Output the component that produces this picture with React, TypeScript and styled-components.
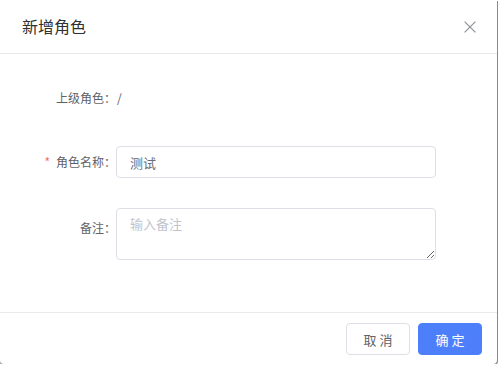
import React from "react";
import styled, { createGlobalStyle } from "styled-components";

const GlobalStyle = createGlobalStyle`
  html, body {
    margin: 0;
    padding: 0;
    background: #ffffff;
  }
  body {
    font-family: "Noto Sans CJK SC", "Noto Sans", "Liberation Sans", sans-serif;
  }
  * { box-sizing: border-box; }
`;

const Dialog = styled.div`
  width: 497px;
  height: 364px;
  background: #ffffff;
  display: flex;
  flex-direction: column;
  border-radius: 0 0 4px 4px;
  box-shadow: 1px 1px 0 #8a8a8a, 0 2px 0 #9a9a9a;
`;

const Header = styled.div`
  height: 54px;
  flex: none;
  display: flex;
  align-items: center;
  justify-content: space-between;
  padding: 0 21px 0 22px;
  border-bottom: 1px solid #e9eaee;
`;

const Title = styled.div`
  font-size: 16px;
  line-height: 24px;
  color: #303133;
  margin-top: -1px;
`;

const CloseButton = styled.button`
  width: 12px;
  height: 12px;
  padding: 0;
  border: none;
  background: none;
  display: flex;
  cursor: pointer;
`;

const Body = styled.div`
  flex: 1;
  padding-top: 28px;
  display: flex;
  flex-direction: column;
`;

const Row = styled.div<{ $gap: number }>`
  display: grid;
  grid-template-columns: 116px 320px;
  align-items: start;
  margin-bottom: ${(p) => p.$gap}px;
`;

const Label = styled.label<{ $top?: number }>`
  font-size: 12px;
  line-height: 32px;
  color: #606266;
  text-align: right;
  white-space: nowrap;
  padding-top: ${(p) => p.$top ?? 0}px;
`;

const Star = styled.span`
  color: #f56c6c;
  margin-right: 6px;
`;

const StaticValue = styled.div`
  font-size: 12px;
  line-height: 32px;
  color: #606266;
  padding-left: 1px;
`;

const Input = styled.input`
  width: 320px;
  height: 32px;
  border: 1px solid #dcdfe6;
  border-radius: 4px;
  padding: 0 13px;
  font-size: 13px;
  color: #6b6e73;
  font-family: inherit;
  outline: none;
  background: #fff;
`;

const TextArea = styled.textarea`
  width: 320px;
  height: 52px;
  border: 1px solid #dcdfe6;
  border-radius: 4px;
  padding: 4px 13px;
  font-size: 13px;
  line-height: 22px;
  color: #606266;
  font-family: inherit;
  outline: none;
  display: block;
  &::placeholder {
    color: #c0c4cc;
  }
`;

const Footer = styled.div`
  height: 52px;
  flex: none;
  border-top: 1px solid #e9eaee;
  display: flex;
  justify-content: flex-end;
  align-items: center;
  gap: 8px;
  padding: 1px 15px 0 0;
`;

const Button = styled.button<{ $primary?: boolean }>`
  width: 64px;
  height: 32px;
  border-radius: 4px;
  font-size: 13px;
  font-family: inherit;
  cursor: pointer;
  border: 1px solid ${(p) => (p.$primary ? "#4d7ffa" : "#dcdfe6")};
  background: ${(p) => (p.$primary ? "#4d7ffa" : "#ffffff")};
  color: ${(p) => (p.$primary ? "#ffffff" : "#606266")};
  padding: 0;
`;

export default function App() {
  return (
    <>
      <GlobalStyle />
      <Dialog>
        <Header>
          <Title>新增角色</Title>
          <CloseButton aria-label="close">
            <svg width="12" height="12" viewBox="0 0 12 12">
              <path d="M0.6 0.6 L11.4 11.4 M11.4 0.6 L0.6 11.4" stroke="#8e9196" strokeWidth="1.2" fill="none" />
            </svg>
          </CloseButton>
        </Header>
        <Body>
          <Row $gap={32}>
            <Label>上级角色：</Label>
            <StaticValue>/</StaticValue>
          </Row>
          <Row $gap={30}>
            <Label>
              <Star>*</Star>角色名称：
            </Label>
            <Input defaultValue="测试" />
          </Row>
          <Row $gap={0}>
            <Label $top={4}>备注：</Label>
            <TextArea placeholder="输入备注" />
          </Row>
        </Body>
        <Footer>
          <Button>取 消</Button>
          <Button $primary>确 定</Button>
        </Footer>
      </Dialog>
    </>
  );
}
